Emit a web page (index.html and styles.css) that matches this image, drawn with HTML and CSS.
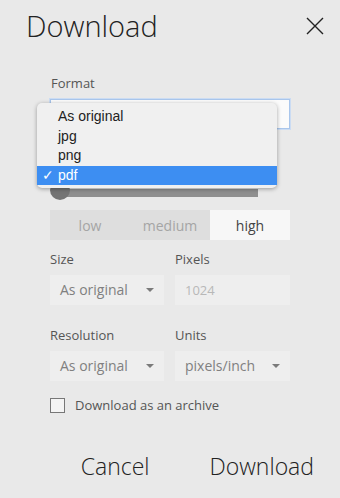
FILE: index.html
```html
<!DOCTYPE html>
<html lang="en">
<head>
<meta charset="UTF-8">
<meta name="viewport" content="width=device-width, initial-scale=1.0">
<title>Download</title>
<link rel="stylesheet" href="styles.css">
</head>
<body>

<div class="dialog">
    <div class="dialog-header">
        <h1>Download</h1>
        <button class="close-button" aria-label="Close">
            <svg width="18" height="18" viewBox="0 0 18 18"><path d="M1 1 L17 17 M17 1 L1 17" stroke="#222" stroke-width="1.4" fill="none"/></svg>
        </button>
    </div>

    <div class="dialog-body">
        <div class="field format-field">
            <label>Format</label>
            <div class="format-select"></div>

            <!-- open format menu -->
            <ul class="format-menu">
                <li>As original</li>
                <li>jpg</li>
                <li>png</li>
                <li class="selected"><span class="check">&#10003;</span>pdf</li>
            </ul>
        </div>

        <div class="quality-slider">
            <div class="slider-track"></div>
            <div class="slider-thumb"></div>
        </div>

        <div class="segmented">
            <button>low</button>
            <button>medium</button>
            <button class="active">high</button>
        </div>

        <div class="field-row size-row">
            <div class="field">
                <label>Size</label>
                <div class="select">As original <span class="arrow"></span></div>
            </div>
            <div class="field">
                <label>Pixels</label>
                <input type="text" class="text-input" placeholder="1024">
            </div>
        </div>

        <div class="field-row">
            <div class="field">
                <label>Resolution</label>
                <div class="select">As original <span class="arrow"></span></div>
            </div>
            <div class="field">
                <label>Units</label>
                <div class="select">pixels/inch <span class="arrow"></span></div>
            </div>
        </div>

        <label class="checkbox-row">
            <span class="checkbox"></span>
            Download as an archive
        </label>
    </div>

    <div class="dialog-footer">
        <button class="footer-button">Cancel</button>
        <button class="footer-button">Download</button>
    </div>
</div>

</body>
</html>
```

FILE: styles.css
```css
body {
    background-color: #e9e9e9;
    color: #222;
    font-family: "Open Sans", sans-serif;
    margin: 0;
    padding: 0;
}
button {
    font-family: inherit;
    border: none;
    background: none;
    padding: 0;
    cursor: pointer;
}
.dialog {
    width: 340px;
    height: 498px;
    display: flex;
    flex-direction: column;
}
.dialog-header {
    display: flex;
    justify-content: space-between;
    align-items: center;
    padding: 3px 16px 0 26px;
    height: 44px;
}
h1 {
    margin: 0;
    font-size: 29px;
    font-weight: 300;
}
.close-button {
    width: 18px;
    height: 18px;
    margin-top: 2px;
}
.dialog-body {
    padding: 0 50px;
    flex: 1;
}
.field {
    display: flex;
    flex-direction: column;
}
.field label {
    font-size: 13px;
    font-weight: 500;
    color: #555;
    margin-bottom: 7px;
}
.format-field {
    position: relative;
    margin-top: 27px;
}
.format-field label {
    margin-left: 1px;
}
.format-select {
    height: 28px;
    background-color: #fbfbfb;
    border: 1px solid #a9c6ec;
    box-shadow: 0 0 0 1px #cbdcf3;
}
.format-menu {
    position: absolute;
    left: -13px;
    top: 29px;
    width: 240px;
    margin: 0;
    padding: 4px 0 3px;
    list-style: none;
    background-color: #f0f0f0;
    border-radius: 5px;
    box-shadow: 0 1px 4px rgba(0, 0, 0, 0.35);
    font-family: "Liberation Sans", sans-serif;
    font-size: 14px;
    z-index: 2;
}
.format-menu li {
    height: 19.5px;
    line-height: 19.5px;
    padding-left: 21px;
    position: relative;
}
.format-menu li.selected {
    background-color: #3d8ef2;
    color: white;
}
.check {
    position: absolute;
    left: 5px;
}
.quality-slider {
    position: relative;
    height: 40px;
    margin-top: 31px;
}
.slider-track {
    position: absolute;
    left: 10px;
    right: 32px;
    bottom: 3px;
    height: 8px;
    background-color: #8f8f8f;
}
.slider-thumb {
    position: absolute;
    left: 0;
    bottom: 0;
    width: 20px;
    height: 20px;
    border-radius: 50%;
    background-color: #747474;
}
.segmented {
    display: grid;
    grid-template-columns: 1fr 1fr 1fr;
    height: 30px;
    margin-top: 10px;
    background-color: #dedede;
}
.segmented button {
    font-size: 14px;
    color: #a5a5a5;
}
.segmented button.active {
    background-color: #f7f7f7;
    color: #444;
}
.field-row {
    display: grid;
    grid-template-columns: 114px 115px;
    column-gap: 11px;
    margin-top: 21px;
}
.field-row.size-row {
    margin-top: 10px;
}
.select {
    height: 30px;
    line-height: 30px;
    background-color: #eeeeee;
    color: #808080;
    font-size: 14px;
    padding-left: 10px;
    position: relative;
}
.arrow {
    position: absolute;
    right: 10px;
    top: 13px;
    border-left: 4px solid transparent;
    border-right: 4px solid transparent;
    border-top: 4px solid #7a7a7a;
}
.text-input {
    height: 30px;
    border: none;
    background-color: #eeeeee;
    font-family: inherit;
    font-size: 13px;
    padding: 0 0 0 10px;
    box-sizing: border-box;
    width: 100%;
}
.text-input::placeholder {
    color: #b8b8b8;
}
.checkbox-row {
    display: flex;
    align-items: center;
    gap: 10px;
    margin-top: 15px;
    font-size: 13px;
    color: #555;
}
.checkbox {
    width: 13px;
    height: 13px;
    border: 1px solid #777;
    background-color: #f4f4f4;
}
.dialog-footer {
    display: flex;
    justify-content: flex-end;
    gap: 60px;
    padding: 0 26px 16px 0;
}
.footer-button {
    font-size: 23px;
    font-weight: 300;
    color: #222;
}
```
